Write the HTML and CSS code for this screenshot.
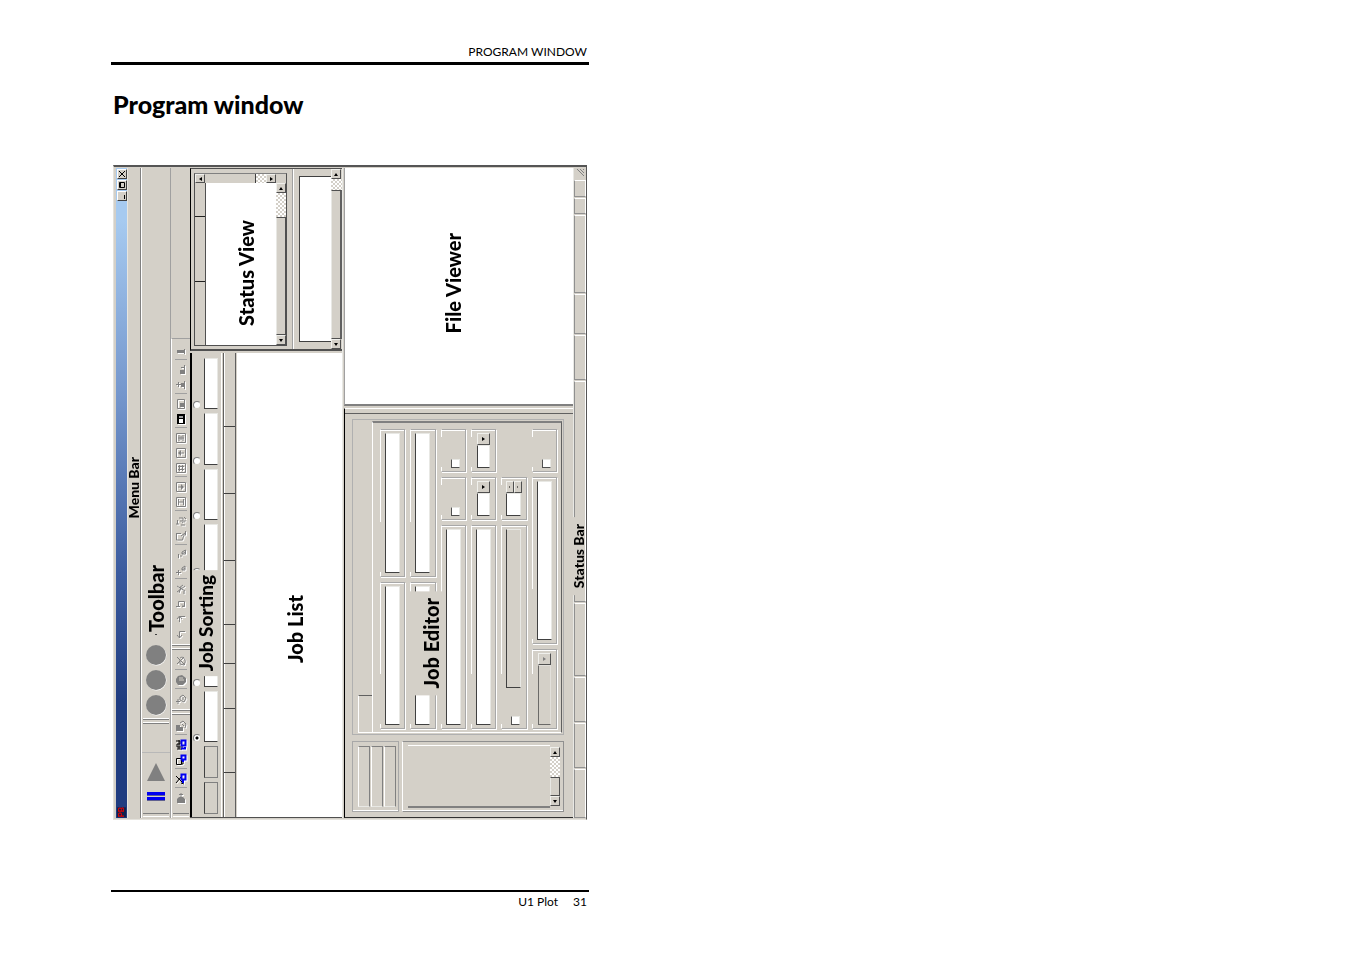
FILE: index.html
```html
<!DOCTYPE html>
<html lang="en">
<head>
    <meta charset="UTF-8">
    <meta name="viewport" content="width=device-width, initial-scale=1.0">
    <title>U1 Plot - Program window</title>
    <link rel="stylesheet" href="styles.css">
</head>
<body>
    <!-- icons, drawn turned to the left like the window itself -->
    <svg class="defs" width="0" height="0">
        <symbol id="i-bar" viewBox="0 0 12 12"><path class="fill" d="M2 5h8v3H2z" /><path d="M9.500 4v5" /></symbol>
        <symbol id="i-up" viewBox="0 0 12 12"><path d="M1 5.500h5M3.500 3v5M9.500 2v8" /><path class="fill" d="M6 4h3v4H6z" /></symbol>
        <symbol id="i-step" viewBox="0 0 12 12"><path d="M9.500 1v9M6 3.500h4" /><path class="fill" d="M5 6h4v4H5z" /></symbol>
        <symbol id="i-save" viewBox="0 0 12 12"><path d="M2.500 1.500h7v9h-7z" /><path class="fill" d="M5 5h4v4H5z" /></symbol>
        <symbol id="i-disk" viewBox="0 0 12 12"><path class="fill" d="M2 1h8v10H2z" /><path class="paper" d="M4 6h4v4H4z" /><path class="gray" d="M4 3h4v2H4z" /></symbol>
        <symbol id="i-first" viewBox="0 0 12 12"><path d="M1.500 1.500h9v9h-9zM3 6h6M4 3v6M8 3v6M6 4v4" /></symbol>
        <symbol id="i-prev" viewBox="0 0 12 12"><path d="M1.500 1.500h9v9h-9zM4 6h5" /><path class="fill" d="M3 6l3-3v6z" /></symbol>
        <symbol id="i-hash" viewBox="0 0 12 12"><path d="M1.500 1.500h9v9h-9zM3 4.500h6M3 7.500h6M4.500 3v6M7.500 3v6" /></symbol>
        <symbol id="i-next" viewBox="0 0 12 12"><path d="M1.500 1.500h9v9h-9zM3 6h5" /><path class="fill" d="M9 6l-3-3v6z" /></symbol>
        <symbol id="i-last" viewBox="0 0 12 12"><path d="M1.500 1.500h9v9h-9zM3 6h6M3.500 3v6M8.500 3v6" /></symbol>
        <symbol id="i-sort" viewBox="0 0 12 12"><path d="M1 9h3M2.500 9V5M4 3h4v3H5M7 8c2-3 3 1 3-3M6 10h4M9 2l2 2" /></symbol>
        <symbol id="i-mark" viewBox="0 0 12 12"><path d="M1.500 3v7h6l1-4M1 3.500h5M6 6l4-3M10.500 1v4H8" /></symbol>
        <symbol id="i-minus" viewBox="0 0 12 12"><path d="M3.500 5v4M5 7h2M7 5l3-2M10.500 1v4H7V3z" /></symbol>
        <symbol id="i-plus" viewBox="0 0 12 12"><path d="M3.500 6v5M1 8.500h5M7 6l3-2M10 2v4H7V4z" /></symbol>
        <symbol id="i-cut" viewBox="0 0 12 12"><path d="M2 3l8 5M2 9l8-6M6 4l-2 6M8 2l-4 3M9 8v3" /></symbol>
        <symbol id="i-loop" viewBox="0 0 12 12"><path d="M3.500 9V3.500h6v5H7M1 8.500h4M7 6.500L9.500 9" /></symbol>
        <symbol id="i-redo" viewBox="0 0 12 12"><path d="M10 3.500H4.500V9M2 6l2.500-3L7 6" /></symbol>
        <symbol id="i-undo" viewBox="0 0 12 12"><path d="M10 3.500H4.500V10M2 7l2.500 3L7 7" /></symbol>
        <symbol id="i-nohand" viewBox="0 0 12 12"><path d="M2 2l8 8M2 9l7-7M5 3c4-3 7 4 4 6M5 5v4l4 1" /></symbol>
        <symbol id="i-hand" viewBox="0 0 12 12"><path class="fill" d="M1 5l2-3 4-1 4 3v4l-3 3H3L1 8z" /><path class="light" d="M4 4h4M4 6h5" /></symbol>
        <symbol id="i-tag" viewBox="0 0 12 12"><path d="M1 8.500h4M3 6v5M5 4l3-2 3 3-2 4-4-2zM8 4v3" /></symbol>
        <symbol id="i-jar" viewBox="0 0 12 12"><path class="fill" d="M1 5h4v6H1zM5 7h3v4H5z" /><path d="M5 3l3-2 3 3-1 4M7 4l2 2" /></symbol>
        <symbol id="i-copy" viewBox="0 0 12 12"><path class="ink" d="M1 2h4v3H2v3h4M2 10h5V7M4 1v9" /><path class="blue" d="M6.500 1.500h4v5h-4zM6 9.500h4V8" /></symbol>
        <symbol id="i-paste" viewBox="0 0 12 12"><path class="ink" d="M1.500 4.500h5v6h-5zM7 10h1V6" /><path class="blue" d="M6.500 1.500h4v4h-4zM8 5.500V8" /></symbol>
        <symbol id="i-erase" viewBox="0 0 12 12"><path class="ink" d="M1 3l7 7M1 10l5-6M6 10l3 1" /><path class="blue" d="M6.500 1.500h4v5h-4zM8 6v4" /></symbol>
        <symbol id="i-bottle" viewBox="0 0 12 12"><path class="fill" d="M4 5h4l2 2v4H2V7z" /><path d="M4 2.500h4M6 1v4" /></symbol>
    </svg>

    <main class="sheet">
        <header class="sheet-head">PROGRAM WINDOW</header>
        <h1>Program window</h1>

        <div class="window">
            <div class="title-bar">
                <button class="cap" aria-label="Close"><svg viewBox="0 0 8 8"><path d="M1 1l6 6M7 1L1 7" /></svg></button>
                <button class="cap" aria-label="Maximize"><svg viewBox="0 0 8 8"><path d="M1.500 1.500h5v5h-5zM2.500 1v6" /></svg></button>
                <button class="cap" aria-label="Minimize"><svg viewBox="0 0 8 8"><path d="M6.500 3v4" /></svg></button>
                <span class="app-icon">PB</span>
            </div>

            <div class="menu-bar"><span class="label small">Menu Bar</span></div>

            <div class="toolbar">
                <span class="label">Toolbar</span>
                <i class="dot"></i>
                <button class="big" aria-label="Stop"><svg viewBox="0 0 22 22"><circle cx="11.500" cy="11.500" r="10" fill="#fff" /><circle cx="11" cy="11" r="10" /></svg></button>
                <button class="big" aria-label="Record"><svg viewBox="0 0 22 22"><circle cx="11.500" cy="11.500" r="10" fill="#fff" /><circle cx="11" cy="11" r="10" /></svg></button>
                <button class="big" aria-label="Plot"><svg viewBox="0 0 22 22"><circle cx="11.500" cy="11.500" r="10" fill="#fff" /><circle cx="11" cy="11" r="10" /></svg></button>
                <i class="grip"></i>
                <i class="blank"></i>
                <button class="big" aria-label="Start"><svg viewBox="0 0 22 22"><path d="M11 1l9 18H2z" /></svg></button>
                <button class="big" aria-label="Pause"><svg viewBox="0 0 22 22"><path fill="#0000f0" d="M2 5h18v3H2zM2 10h18v3H2z" /><path fill="#606090" d="M2 8h18v1H2zM2 13h18v1H2z" /></svg></button>
                <i class="end"></i>
            </div>

            <div class="tools">
                <button aria-label="Bar"><svg><use href="#i-bar" /></svg></button>
                <hr>
                <button aria-label="Step"><svg><use href="#i-step" /></svg></button>
                <button aria-label="Up"><svg><use href="#i-up" /></svg></button>
                <hr>
                <button aria-label="Save"><svg><use href="#i-save" /></svg></button>
                <button class="dark" aria-label="Save all"><svg><use href="#i-disk" /></svg></button>
                <hr>
                <button aria-label="First"><svg><use href="#i-first" /></svg></button>
                <button aria-label="Previous"><svg><use href="#i-prev" /></svg></button>
                <button aria-label="Number"><svg><use href="#i-hash" /></svg></button>
                <hr>
                <button aria-label="Next"><svg><use href="#i-next" /></svg></button>
                <button aria-label="Last"><svg><use href="#i-last" /></svg></button>
                <hr>
                <button aria-label="Sort"><svg><use href="#i-sort" /></svg></button>
                <button aria-label="Mark"><svg><use href="#i-mark" /></svg></button>
                <hr>
                <button aria-label="Remove"><svg><use href="#i-minus" /></svg></button>
                <button aria-label="Add"><svg><use href="#i-plus" /></svg></button>
                <hr>
                <button aria-label="Cut"><svg><use href="#i-cut" /></svg></button>
                <button aria-label="Rotate"><svg><use href="#i-loop" /></svg></button>
                <button aria-label="Redo"><svg><use href="#i-redo" /></svg></button>
                <button aria-label="Undo"><svg><use href="#i-undo" /></svg></button>
                <i class="grip"></i>
                <button aria-label="No hold"><svg><use href="#i-nohand" /></svg></button>
                <hr>
                <button aria-label="Hold"><svg><use href="#i-hand" /></svg></button>
                <hr>
                <button aria-label="Tag"><svg><use href="#i-tag" /></svg></button>
                <i class="grip"></i>
                <button aria-label="Ink"><svg><use href="#i-jar" /></svg></button>
                <hr>
                <button aria-label="Copy job"><svg><use href="#i-copy" /></svg></button>
                <button aria-label="Paste job"><svg><use href="#i-paste" /></svg></button>
                <hr>
                <button aria-label="Delete job"><svg><use href="#i-erase" /></svg></button>
                <hr>
                <button aria-label="Colour"><svg><use href="#i-bottle" /></svg></button>
                <i class="end"></i>
            </div>

            <div class="left-pane">
                <section class="status-view">
                    <div class="tree">
                        <div class="tree-head"><i></i><i></i><i></i></div>
                        <div class="tree-body"><span class="label">Status View</span></div>
                        <div class="h-scroll"><b class="arrow west"></b><b class="thumb"></b><b class="track"></b><b class="arrow east"></b></div>
                        <div class="v-scroll"><b class="arrow north"></b><b class="track"></b><b class="thumb"></b><b class="arrow south"></b></div>
                    </div>
                    <div class="messages">
                        <textarea aria-label="Messages"></textarea>
                        <div class="v-scroll"><b class="arrow north"></b><b class="track"></b><b class="thumb"></b><b class="arrow south"></b></div>
                    </div>
                </section>

                <section class="jobs">
                    <div class="sorting">
                        <div class="sort-row"><input type="radio" name="sort" aria-label="Key 7"><input type="text" aria-label="Value 7"></div>
                        <div class="sort-row"><input type="radio" name="sort" aria-label="Key 6"><input type="text" aria-label="Value 6"></div>
                        <div class="sort-row"><input type="radio" name="sort" aria-label="Key 5"><input type="text" aria-label="Value 5"></div>
                        <div class="sort-row"><input type="radio" name="sort" aria-label="Key 4"><input type="text" aria-label="Value 4"></div>
                        <div class="sort-row"><input type="radio" name="sort" aria-label="Key 3"><input type="text" aria-label="Value 3"></div>
                        <div class="sort-row"><input type="radio" name="sort" aria-label="Key 2"><input type="text" aria-label="Value 2"></div>
                        <div class="sort-row"><input type="radio" name="sort" aria-label="Key 1" checked><input type="text" aria-label="Value 1"></div>
                        <button class="sort-button" aria-label="Ascending"></button>
                        <button class="sort-button" aria-label="Descending"></button>
                        <span class="label medium over">Job Sorting</span>
                    </div>
                    <div class="list-head"><i></i><i></i><i></i><i></i><i></i><i></i><i></i><i></i></div>
                    <div class="list-body"><span class="label">Job List</span></div>
                </section>
            </div>

            <div class="right-pane">
                <section class="viewer"><span class="label">File Viewer</span></section>

                <section class="editor">
                    <div class="tab-frame">
                        <div class="tab-strip"><i></i></div>
                        <div class="tab-page">
                            <div class="col">
                                <div class="field"><input type="text" aria-label="Customer"></div>
                                <div class="field"><input type="text" aria-label="Job name"></div>
                            </div>
                            <div class="col">
                                <div class="field"><input type="text" aria-label="Media"></div>
                                <div class="field"><input type="text" aria-label="Device"></div>
                            </div>
                            <div class="col">
                                <div class="field short"><input type="checkbox" aria-label="Mirror"></div>
                                <div class="field short"><input type="checkbox" aria-label="Rotate"></div>
                                <div class="field"><input type="text" aria-label="File"></div>
                            </div>
                            <div class="col">
                                <div class="field short combo"><b class="arrow east"></b><select aria-label="Unit"></select></div>
                                <div class="field short combo"><b class="arrow east"></b><select aria-label="Copies"></select></div>
                                <div class="field"><input type="text" aria-label="Path"></div>
                            </div>
                            <div class="col">
                                <div class="none"></div>
                                <div class="field short combo"><span class="spin"><b class="arrow west"></b><b class="arrow east"></b></span><input type="text" aria-label="Priority"></div>
                                <div class="field scaled"><input type="text" aria-label="Scale" disabled><input type="checkbox" aria-label="Use scale"></div>
                            </div>
                            <div class="col">
                                <div class="field short"><input type="checkbox" aria-label="Delete after plot"></div>
                                <div class="field"><input type="text" aria-label="Comment"></div>
                                <div class="field low combo"><b class="arrow east off"></b><select aria-label="Queue" disabled></select></div>
                            </div>
                        </div>
                    </div>
                    <div class="editor-foot">
                        <div class="foot-buttons">
                            <button aria-label="Apply"></button>
                            <button aria-label="Reset"></button>
                            <button aria-label="Help"></button>
                        </div>
                        <div class="notes">
                            <textarea aria-label="Notes"></textarea>
                            <div class="v-scroll"><b class="arrow north"></b><b class="track"></b><b class="thumb"></b><b class="arrow south"></b></div>
                        </div>
                    </div>
                    <span class="label over">Job Editor</span>
                </section>
            </div>

            <div class="status-bar">
                <svg class="corner" viewBox="0 0 12 11"><path d="M3 1l7 7M6 1l4 4M9 1l1 1" /></svg>
                <i></i><i></i><i></i><i></i><i></i><i></i><i></i><i></i><i></i><i></i>
                <span class="label small over">Status Bar</span>
            </div>
        </div>

        <footer class="sheet-foot"><span>U1 Plot</span><span>31</span></footer>
    </main>
</body>
</html>
```
FILE: styles.css
```css
* {
    box-sizing: border-box;
}

body {
    margin: 0;
    background-color: #fff;
    color: #000;
    font-family: Lato, "Liberation Sans", sans-serif;
}

.defs {
    position: absolute;
}

.sheet {
    max-width: 478px;
    margin: 43px 0 0 111px;
}

.sheet-head {
    padding: 0 2px 1px 0;
    border-bottom: 3px solid #000;
    font-size: 12px;
    line-height: 18px;
    text-align: right;
}

h1 {
    margin: 24px 2px 46px;
    font-size: 25px;
    font-weight: 900;
    line-height: 30px;
}

.sheet-foot {
    display: flex;
    justify-content: flex-end;
    gap: 15px;
    margin-top: 70px;
    padding: 1px 2px 0;
    border-top: 2px solid #000;
    font-size: 12px;
    line-height: 18px;
}

/* window frame */

.window {
    display: grid;
    grid-template-columns: 12px 13px 30px 19px 153px 1fr 13px;
    grid-template-rows: minmax(0, 1fr);
    aspect-ratio: 474 / 655;
    margin: 0 2px;
    padding: 1px 0 1px 2px;
    background-color: #d4d0c8;
    border: 1px solid #e4e2dc;
    border-top: 2px solid #555;
    border-right-color: #555;
}

.window button,
.window input,
.window select,
.window textarea {
    appearance: none;
    display: block;
    min-width: 0;
    margin: 0;
    padding: 0;
    border: 0;
    border-radius: 0;
    background: none;
    resize: none;
}

.window svg {
    display: block;
}

.label {
    writing-mode: vertical-rl;
    transform: rotate(180deg);
    font-size: 20px;
    font-weight: 900;
    line-height: 22px;
    white-space: nowrap;
}

.label.medium {
    font-size: 19px;
}

.label.small {
    font-size: 14px;
    line-height: 12px;
}

.label.over {
    position: absolute;
    background-color: #d4d0c8;
}

.title-bar {
    display: flex;
    flex-direction: column;
    gap: 1px;
    padding: 1px 0 1px 1px;
    background: linear-gradient(#a6caf0 8%, #7496cc 35%, #3c5c9f 62%, #1f3c80 82%);
    border-right: 1px solid #e8e6e0;
}

.window .cap {
    width: 10px;
    height: 10px;
    background-color: #d4d0c8;
    border: 1px solid #fff;
    border-right-color: #404040;
    border-bottom-color: #404040;
}

.cap svg {
    width: 8px;
    height: 8px;
    fill: none;
    stroke: #000;
}

.app-icon {
    align-self: flex-start;
    margin-top: auto;
    background-color: #10204c;
    color: #e00000;
    font-size: 8px;
    font-weight: 900;
    line-height: 9px;
    writing-mode: vertical-rl;
    transform: rotate(180deg);
}

.menu-bar {
    display: flex;
    align-items: center;
    padding-bottom: 10px;
    border-right: 1px solid #808080;
}

.toolbar {
    display: flex;
    flex-direction: column;
    align-items: center;
    justify-content: flex-end;
    border-left: 1px solid #fff;
    border-right: 1px solid #a0a0a0;
}

.dot {
    width: 2px;
    height: 1px;
    margin: 2px 0 7px;
    background-color: #404040;
}

.window .big {
    width: 22px;
    height: 25px;
}

.big svg {
    width: 22px;
    height: 22px;
    fill: #808080;
}

.grip {
    align-self: stretch;
    height: 6px;
    margin: 1px;
    border-top: 1px solid #fff;
    border-bottom: 1px solid #808080;
    box-shadow: inset 0 1px #808080, inset 0 -1px #fff;
}

.blank {
    align-self: stretch;
    height: 28px;
    margin-bottom: 7px;
    border-bottom: 1px solid #b8b8b8;
}

.end {
    align-self: stretch;
    height: 4px;
    margin: 3px 1px 1px;
    border-top: 1px solid #808080;
    border-bottom: 1px solid #fff;
}

.tools {
    display: flex;
    flex-direction: column;
    align-items: center;
    align-self: end;
    padding-top: 4px;
    border-top: 1px solid #a0a0a0;
    border-left: 1px solid #fff;
}

.tools button {
    width: 12px;
    height: 15px;
}

.tools svg {
    width: 12px;
    height: 12px;
    fill: none;
    stroke: #808080;
    filter: drop-shadow(1px 1px #fff);
}

.tools hr {
    width: 12px;
    margin: 1px 0 2px;
    border: 0;
    border-top: 1px solid #a0a0a0;
}

.tools .grip {
    margin: 3px 0;
}

.tools .end {
    margin-top: 8px;
}

.fill {
    fill: #808080;
    stroke: none;
}

.dark .fill,
.dark svg {
    fill: #000;
}

.paper {
    fill: #fff;
    stroke: none;
}

.gray {
    fill: #a0a0a0;
    stroke: none;
}

.light {
    stroke: #d4d0c8;
}

.ink {
    stroke: #000;
}

.blue {
    stroke: #0000f0;
    stroke-width: 2;
}

#i-disk .fill {
    fill: #000;
}

/* scroll bars */

.arrow {
    display: flex;
    align-items: center;
    justify-content: center;
    flex: none;
    width: 10px;
    height: 10px;
    background-color: #d4d0c8;
    border: 1px solid #f0f0ec;
    border-right-color: #505050;
    border-bottom-color: #505050;
}

.arrow::before {
    content: "";
    border: 2px solid transparent;
}

.north::before {
    border-top: 0;
    border-bottom: 3px solid #000;
}

.south::before {
    border-bottom: 0;
    border-top: 3px solid #000;
}

.west::before {
    border-left: 0;
    border-right: 3px solid #000;
}

.east::before {
    border-right: 0;
    border-left: 3px solid #000;
}

.off::before {
    border-left-color: #808080;
}

.track {
    background: repeating-conic-gradient(#d4d0c8 0 25%, #fff 0 50%) 0 0 / 4px 4px;
}

.thumb {
    background-color: #d4d0c8;
    border: 1px solid #505050;
    border-left-color: #e8e8e4;
}

.v-scroll {
    display: flex;
    flex-direction: column;
}

.h-scroll {
    display: flex;
}

/* status view, job sorting and job list */

.left-pane {
    display: grid;
    grid-template-rows: 183px 1fr;
    gap: 2px;
    min-height: 0;
    border-right: 1px solid #e8e8e4;
}

.status-view {
    display: grid;
    grid-template-columns: 93px 1fr;
    gap: 5px;
    padding-left: 3px;
    border-left: 1px solid #000;
    border-top: 1px solid #505050;
    border-bottom: 2px solid #505050;
}

.tree {
    display: grid;
    grid-template-columns: 11px 1fr 10px;
    grid-template-rows: 9px 1fr;
    margin: 4px 0 3px;
    border: 1px solid #505050;
    border-top-color: #808080;
}

.tree-head {
    grid-area: 2 / 1;
    display: flex;
    flex-direction: column;
    border-right: 1px solid #505050;
}

.tree-head i {
    flex: 65;
    border-top: 1px solid #202020;
}

.tree-head i:first-child {
    flex: 34;
    border: 0;
}

.tree-body {
    grid-area: 2 / 2;
    display: flex;
    align-items: center;
    justify-content: center;
    padding: 18px 0 0 10px;
    background-color: #fff;
}

.h-scroll {
    grid-area: 1 / 1 / 2 / 3;
}

.h-scroll .thumb {
    flex: 1;
    border: 0;
    border-right: 1px solid #404040;
}

.h-scroll .track {
    width: 10px;
}

.h-scroll .arrow {
    height: 9px;
}

.tree .v-scroll {
    grid-area: 1 / 3 / 3 / 4;
    padding-top: 9px;
}

.tree .v-scroll .track {
    height: 24px;
}

.v-scroll .thumb {
    flex: 1;
}

.messages {
    display: grid;
    grid-template-columns: 1fr 11px;
    padding-left: 6px;
    border-left: 1px solid #a0a0a0;
    box-shadow: inset 1px 0 #fff;
}

.messages textarea {
    width: 100%;
    height: auto;
    margin: 7px 0;
    background-color: #fff;
    border: 1px solid #404040;
    border-right: 0;
}

.messages .track {
    height: 11px;
}

.messages .thumb {
    border-right: 2px solid #606060;
}

.jobs {
    display: grid;
    grid-template-columns: 32px 13px 1fr;
    gap: 1px;
    min-height: 0;
    border-bottom: 1px solid #505050;
}

.sorting {
    position: relative;
    display: flex;
    flex-direction: column;
    gap: 4px;
    padding: 5px 3px 3px 1px;
    border-left: 2px solid #000;
    border-right: 1px solid #fff;
}

.sort-row {
    display: flex;
    flex: 1;
    align-items: flex-end;
    gap: 3px;
}

.window input[type="radio"] {
    width: 8px;
    height: 8px;
    background-color: #fff;
    border: 1px solid #808080;
    border-right-color: #d4d0c8;
    border-bottom-color: #d4d0c8;
    border-radius: 50%;
}

.window input[type="radio"]:checked {
    background: radial-gradient(#000 1px, #fff 2px);
}

.sort-row input[type="text"] {
    flex: 1;
    height: 100%;
    background-color: #fff;
    border: 1px solid #e8e8e4;
    border-left: 1px solid #404040;
    border-bottom: 1px solid #404040;
}

.window .sort-button {
    height: 32px;
    margin-left: 11px;
    border: 1px solid #808080;
    border-left-color: #404040;
}

.sorting .over {
    top: 217px;
    left: 1px;
    padding: 5px 0;
    line-height: 26px;
}

.list-head {
    display: flex;
    flex-direction: column;
    border-left: 1px solid #606060;
    border-right: 1px solid #606060;
    box-shadow: inset 1px 0 #fff;
}

.list-head i {
    border-top: 1px solid #404040;
    flex: 67;
}

.list-head i:first-child {
    flex: 74;
    border: 0;
}

.list-head i:nth-child(4) {
    flex: 64;
}

.list-head i:nth-child(5) {
    flex: 38;
}

.list-head i:nth-child(6),
.list-head i:nth-child(8) {
    flex: 45;
}

.list-head i:nth-child(7) {
    flex: 63;
}

.list-body {
    display: flex;
    align-items: center;
    justify-content: center;
    padding: 88px 0 0 10px;
    background-color: #fff;
}

/* file viewer and job editor */

.right-pane {
    display: grid;
    grid-template-rows: 238px 1fr;
    gap: 2px;
    min-width: 0;
    min-height: 0;
    margin-left: 1px;
}

.viewer {
    display: flex;
    align-items: center;
    justify-content: center;
    padding: 0 13px 6px 0;
    background-color: #fff;
    border-left: 1px solid #a0a0a0;
    border-bottom: 2px solid #808080;
}

.editor {
    position: relative;
    display: flex;
    flex-direction: column;
    gap: 6px;
    padding: 10px 9px 5px 7px;
    border-left: 1px solid #000;
    border-top: 1px solid #fff;
    border-bottom: 1px solid #303030;
    min-height: 0;
}

.editor::before {
    content: "";
    position: absolute;
    top: 4px;
    left: 0;
    right: 0;
    border-top: 1px solid #606060;
}

.tab-frame {
    display: grid;
    grid-template-columns: 18px 1fr;
    flex: 1;
    min-height: 0;
    padding: 1px;
    border: 1px solid #b0b0b0;
}

.tab-strip {
    display: flex;
    flex-direction: column;
    justify-content: flex-end;
    padding-left: 4px;
}

.tab-strip i {
    height: 38px;
    border-top: 1px solid #606060;
    border-left: 1px solid #fff;
    border-bottom: 1px solid #fff;
}

.tab-page {
    display: grid;
    grid-template-columns: repeat(6, 1fr);
    grid-template-rows: minmax(0, 1fr);
    gap: 5px;
    padding: 6px 4px 3px 7px;
    border: 1px solid #fff;
    border-top: 2px solid #808080;
    border-right-color: #606060;
}

.col {
    display: flex;
    flex-direction: column;
    gap: 5px;
}

.field {
    position: relative;
    display: flex;
    flex-direction: column;
    align-items: center;
    flex: 1;
    padding: 3px;
    border: 1px solid #a8a8a8;
    border-left-color: #fff;
    box-shadow: inset 0 1px #fff, 1px 1px #fff;
}

/* gap in the frame that the caption leaves */
.field::after {
    content: "";
    position: absolute;
    left: -1px;
    bottom: 4px;
    width: 1px;
    height: 50px;
    background-color: #d4d0c8;
}

.field.short::after {
    height: 30px;
}

.field.short,
.none {
    flex: none;
    height: 43px;
}

.field.low {
    flex: none;
    height: 80px;
}

.field input[type="text"],
.field select {
    flex: 1;
    width: 15px;
    background-color: #fff;
    border: 1px solid #e8e8e4;
    border-left: 1px solid #404040;
    border-bottom: 1px solid #404040;
}

.field input[type="checkbox"] {
    width: 9px;
    height: 9px;
    margin-top: auto;
    margin-left: 4px;
    background-color: #fff;
    border: 1px solid #e8e8e4;
    border-left-color: #505050;
    border-bottom-color: #505050;
}

.field input:disabled,
.field select:disabled {
    background-color: #d4d0c8;
}

.field select {
    width: 13px;
}

.combo .arrow {
    width: 13px;
    height: 12px;
}

.spin {
    display: flex;
}

.combo .spin .arrow {
    width: 8px;
}

.spin .arrow::before {
    border-width: 1px;
}

.scaled input[type="text"] {
    margin-bottom: 28px;
}

.editor-foot {
    display: grid;
    grid-template-columns: 47px 1fr;
    gap: 3px;
    height: 71px;
}

.foot-buttons {
    display: grid;
    grid-template-columns: repeat(3, 1fr);
    gap: 1px;
    padding: 4px 2px 4px 5px;
    border: 1px solid #a8a8a8;
    box-shadow: inset 0 -1px #fff;
}

.window .foot-buttons button {
    border: 1px solid #808080;
    border-left-color: #fff;
    border-bottom-color: #e8e8e4;
}

.notes {
    display: grid;
    grid-template-columns: 1fr 10px;
    padding: 3px;
    border: 1px solid #909090;
    border-left-color: #fff;
    box-shadow: inset 0 -1px #fff;
}

.notes textarea {
    width: auto;
    height: auto;
    margin-left: 2px;
    border-top: 1px solid #fff;
    border-bottom: 2px solid #808080;
}

.notes .v-scroll {
    padding: 2px 0;
}

.notes .track {
    height: 20px;
}

/* turned half round, so its right padding lies on the left */
.editor .over {
    top: 182px;
    left: 64px;
    padding: 7px 11px 7px 0;
}

/* status bar */

.status-bar {
    position: relative;
    display: flex;
    flex-direction: column;
    gap: 1px;
    border-left: 1px solid #e8e8e4;
}

.corner {
    width: 12px;
    height: 11px;
    stroke: #808080;
}

.status-bar i {
    flex: 44;
    border: 1px solid #909090;
    border-right-color: #fff;
    border-top-color: #fff;
}

.status-bar i:nth-of-type(1),
.status-bar i:nth-of-type(2) {
    flex: 15;
}

.status-bar i:nth-of-type(3) {
    flex: 77;
}

.status-bar i:nth-of-type(4) {
    flex: 39;
}

.status-bar i:nth-of-type(6) {
    flex: 223;
}

.status-bar i:nth-of-type(7) {
    flex: 72;
}

.status-bar i:nth-of-type(10) {
    flex: 48;
}

.status-bar .over {
    top: 349px;
    left: -1px;
    padding: 7px 0;
}
```
